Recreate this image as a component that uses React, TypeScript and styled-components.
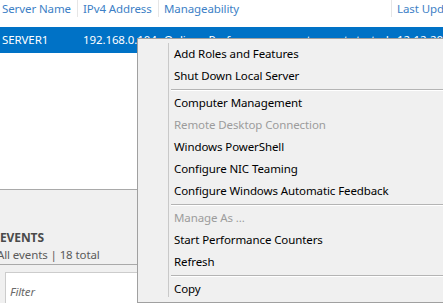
import React from "react";
import styled, { createGlobalStyle } from "styled-components";

const GlobalStyle = createGlobalStyle`
  html, body {
    margin: 0;
    padding: 0;
    background: #ffffff;
  }
  body {
    font-family: "Noto Sans", "Open Sans", "Liberation Sans", sans-serif;
    font-size: 11.5px;
    letter-spacing: -0.1px;
  }
`;

const Screen = styled.div`
  position: relative;
  width: 443px;
  height: 303px;
  overflow: hidden;
  display: flex;
  flex-direction: column;
  background: #ffffff;
`;

const HeaderRow = styled.div`
  display: flex;
  flex: 0 0 17px;
`;

const HeaderCell = styled.div<{ $w?: number }>`
  flex: ${(p) => (p.$w ? `0 0 ${p.$w}px` : "1 1 auto")};
  box-sizing: border-box;
  padding-left: 5px;
  color: #3d7fc6;
  line-height: 17px;
  white-space: nowrap;
  border-right: 1px solid #e6e6e6;

  &:first-child {
    padding-left: 2px;
  }
  &:last-child {
    border-right: none;
  }
`;

const ServerRow = styled.div`
  display: flex;
  flex: 0 0 26px;
  margin-top: 10px;
  background: #0072c6;
  color: #ffffff;
`;

const RowCell = styled.div<{ $w?: number }>`
  flex: ${(p) => (p.$w ? `0 0 ${p.$w}px` : "1 1 auto")};
  box-sizing: border-box;
  padding-left: 5px;
  line-height: 26px;
  white-space: nowrap;
  overflow: hidden;

  &:first-child {
    padding-left: 2px;
  }
`;

const Spacer = styled.div`
  flex: 1 1 auto;
  min-height: 0;
`;

const EventsPanel = styled.section`
  flex: 0 0 76px;
  box-sizing: border-box;
  border-top: 1px solid #a9a9a9;
  border-bottom: 1px solid #a9a9a9;
  background: #f0f0f0;
  display: flex;
  flex-direction: column;
  justify-content: flex-end;
  margin-left: -3px;
`;

const EventsTitle = styled.h2`
  margin: 0;
  padding-left: 3px;
  font-size: 12px;
  font-weight: 700;
  color: #4a4a4a;
  line-height: 17px;
`;

const EventsCount = styled.div`
  color: #5a5a5a;
  line-height: 18px;
`;

const FilterBar = styled.div`
  flex: 0 0 38px;
  min-height: 0;
  overflow: hidden;
  background: #f0f0f0;
  padding: 7px 0 0 5px;
  box-sizing: border-box;
`;

const FilterInput = styled.div`
  height: 40px;
  background: #ffffff;
  border: 1px solid #cccccc;
  padding-left: 4px;
  color: #6a6a6a;
  font-style: italic;
  line-height: 38px;
`;

const Menu = styled.ul`
  position: absolute;
  left: 137px;
  top: 38px;
  width: 303px;
  margin: 0;
  padding: 4px 2px 2px 2px;
  list-style: none;
  background: #f0f0f0;
  border: 1px solid #a0a0a0;
  box-shadow: 2px 2px 2px rgba(0, 0, 0, 0.15);

  &::before {
    content: "";
    position: absolute;
    left: 30px;
    top: 4px;
    bottom: 5px;
    width: 1px;
    background: #c9c9c9;
  }
`;

const MenuItem = styled.li<{ $disabled?: boolean }>`
  height: 22px;
  line-height: 22px;
  padding-left: 34px;
  color: ${(p) => (p.$disabled ? "#9c9c9c" : "#000000")};
  white-space: nowrap;
`;

const MenuSeparator = styled.li`
  height: 1px;
  margin: 2px 0 1px 31px;
  background: #b4b4b4;
  border-bottom: 1px solid #ffffff;
`;

type Entry = { label: string; disabled?: boolean } | "sep";

const entries: Entry[] = [
  { label: "Add Roles and Features" },
  { label: "Shut Down Local Server" },
  "sep",
  { label: "Computer Management" },
  { label: "Remote Desktop Connection", disabled: true },
  { label: "Windows PowerShell" },
  { label: "Configure NIC Teaming" },
  { label: "Configure Windows Automatic Feedback" },
  "sep",
  { label: "Manage As ...", disabled: true },
  { label: "Start Performance Counters" },
  { label: "Refresh" },
  "sep",
  { label: "Copy" },
];

export default function App() {
  return (
    <>
      <GlobalStyle />
      <Screen>
        <HeaderRow>
          <HeaderCell $w={78}>Server Name</HeaderCell>
          <HeaderCell $w={81}>IPv4 Address</HeaderCell>
          <HeaderCell $w={233}>Manageability</HeaderCell>
          <HeaderCell>Last Update</HeaderCell>
        </HeaderRow>
        <ServerRow>
          <RowCell $w={78}>SERVER1</RowCell>
          <RowCell $w={81}>192.168.0.104</RowCell>
          <RowCell $w={233}>Online - Performance counters not started</RowCell>
          <RowCell>12-12-2016 10:14:31</RowCell>
        </ServerRow>
        <Spacer />
        <EventsPanel>
          <EventsTitle>EVENTS</EventsTitle>
          <EventsCount>All events | 18 total</EventsCount>
        </EventsPanel>
        <FilterBar>
          <FilterInput>Filter</FilterInput>
        </FilterBar>

        <Menu>
          {entries.map((e, i) =>
            e === "sep" ? (
              <MenuSeparator key={i} />
            ) : (
              <MenuItem key={i} $disabled={e.disabled}>
                {e.label}
              </MenuItem>
            )
          )}
        </Menu>
      </Screen>
    </>
  );
}
